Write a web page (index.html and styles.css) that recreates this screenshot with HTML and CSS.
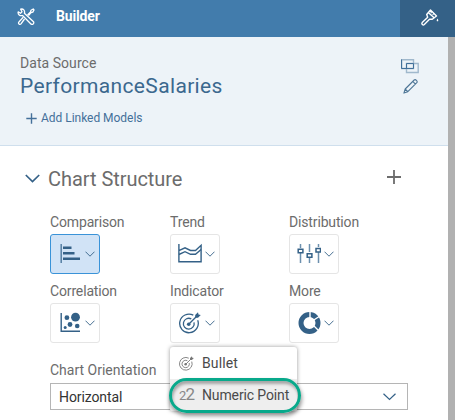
FILE: index.html
```html
<!DOCTYPE html>
<html lang="en">
<head>
<meta charset="utf-8">
<title>Builder</title>
<link rel="stylesheet" href="styles.css">
</head>
<body>
<svg width="0" height="0" class="defs">
  <symbol id="chev" viewBox="0 0 10 6"><path d="M.5 .7L5 5.200L9.500 .7" fill="none" stroke="currentColor" stroke-width=".9"/></symbol>
  <symbol id="target" viewBox="0 0 22 22"><g fill="none" stroke="currentColor" stroke-width="1.300"><path d="M14.300 3.200A9.300 9.300 0 1 0 18.700 8.200"/><path d="M12.300 6.900A5.400 5.400 0 1 0 15 10.300"/><path d="M9.700 12.300L17.500 4.500"/></g><circle cx="9.700" cy="12.200" r="1.800" fill="currentColor"/><path d="M16.200 5.800V3L19 .2L19.500 2.400L21.800 3L19 5.800z" fill="currentColor"/></symbol>
</svg>
<header class="topbar">
  <svg class="tools" width="18" height="18" viewBox="0 0 18 18" fill="none" stroke="currentColor" stroke-width="1.300" stroke-linejoin="round"><path d="M1.200 3.800L3.500 5.300L5 3.800L3.700 1.200C6.200 .4 8.200 2.600 7.400 5.300L16.500 13.700C17.400 15.200 15.800 17 14.200 16.200L5.500 7.500C3 8.300 .6 6.300 1.200 3.800z"/><path d="M7.500 11L4 15.900C2.800 17.200 .7 15.500 1.800 14.200L6.200 9.200M10.500 7L13.500 4L14 2.200L16.200 1L17 1.900L15.800 4.100L14 4.600L11.500 7.700"/></svg>
  <h1 class="title">Builder</h1>
  <div class="style-tab">
    <svg width="18" height="17" viewBox="0 0 18 17" fill="none" stroke="currentColor" stroke-width="1.400" stroke-linejoin="round"><path d="M5.700 5.500L9.500 1L15.500 7L11.300 10.200L8.500 10.300L3.300 15.500C2 16.700 .2 15 1.200 13.600L6.700 8.300z"/><path d="M7.300 3.500L13.300 9"/><path d="M11 2L9.800 4.200M13 4L11.700 6" stroke-width="1.100"/><path d="M16.500 9.500C15.300 11.500 15.600 12.300 16.500 12.300S17.700 11.500 16.500 9.500z" fill="currentColor" stroke="none"/></svg>
  </div>
</header>
<main class="panel">
  <section class="source">
    <div class="source-text">
      <div class="caption">Data Source</div>
      <div class="model">PerformanceSalaries</div>
      <div class="add"><svg width="11" height="11" viewBox="0 0 11 11"><path d="M5.500 .3V10.700M.3 5.500H10.700" stroke="currentColor" stroke-width="1.400"/></svg><span>Add Linked Models</span></div>
    </div>
    <div class="source-actions">
      <svg width="18" height="15" viewBox="0 0 18 15" fill="none"><path d="M.7 .7H12.500V9.500H.7zM5.500 4.500H17.200V13.500H5.500z" stroke="#a0b8cc" stroke-width="1.400"/><path d="M.5 .5V9.500H12.500V4.500H5.500V9.500" stroke="#41709a"/></svg>
      <svg width="15" height="15" viewBox="0 0 15 15" fill="none" stroke="#4d7596" stroke-width="1.100" stroke-linejoin="round"><path d="M.9 14.100L2.200 10L11.200 1C12.500 -.1 15 2.300 13.800 3.700L4.800 12.700zM2.200 10L4.800 12.700M9.800 2.400L12.400 5.100"/></svg>
    </div>
  </section>
  <section class="structure">
    <div class="heading">
      <svg class="blue" width="15" height="9" viewBox="0 0 15 9"><path d="M.8 1L7.500 7.500L14.200 1" fill="none" stroke="currentColor" stroke-width="1.700"/></svg>
      <h2>Chart Structure</h2>
      <svg class="plus" width="14" height="14" viewBox="0 0 14 14"><path d="M7 0V14M0 7H14" stroke="currentColor" stroke-width="1.800"/></svg>
    </div>
    <div class="types">
      <div class="type"><span>Comparison</span>
        <div class="button selected"><svg class="icon" width="22" height="22" viewBox="0 0 22 22"><path d="M2.200 1V20" stroke="#557fa3" stroke-width="1.500"/><path d="M4 4.800H12.500M4 10.300H15.500M4 15.700H21" stroke="currentColor" stroke-width="2.400"/></svg><svg class="chev" width="10" height="6"><use href="#chev"/></svg></div></div>
      <div class="type"><span>Trend</span>
        <div class="button"><svg class="icon wide" width="24" height="22" viewBox="0 0 24 22" fill="none" stroke="currentColor" stroke-width="1.400"><path d="M.9 1V18.700H23.100V2.300L17.500 7.500H12.500L7 4.800L.9 7.600"/><path d="M.9 11.500L7 8.700L12.500 11.300H17.500L23.100 6.500"/></svg><svg class="chev" width="10" height="6"><use href="#chev"/></svg></div></div>
      <div class="type"><span>Distribution</span>
        <div class="button"><svg class="icon wide" width="24" height="22" viewBox="0 0 24 22" fill="none" stroke="currentColor" stroke-width="1.500"><path d="M3.500 1V5M3.500 10V20M12.500 1V9M12.500 15V20M21.500 1V4M21.500 9V20" stroke="#6c90ae"/><path d="M1.200 6.200H5.900V9.700H1.200zM10.200 10.700H14.900V14.200H10.200zM19 5.400H23.500V8.900H19z"/></svg><svg class="chev" width="10" height="6"><use href="#chev"/></svg></div></div>
      <div class="type"><span>Correlation</span>
        <div class="button"><svg class="icon" width="22" height="22" viewBox="0 0 22 22" fill="currentColor"><path d="M2.200 1V19.200H21" fill="none" stroke="currentColor" stroke-width="1.400"/><circle cx="7.900" cy="5.700" r="2.400"/><circle cx="16.500" cy="5.200" r="4.400"/><circle cx="11" cy="12.500" r="2.400"/><circle cx="18.200" cy="14" r="2.300"/><circle cx="6.200" cy="15.500" r="1.500"/></svg><svg class="chev" width="10" height="6"><use href="#chev"/></svg></div></div>
      <div class="type"><span>Indicator</span>
        <div class="button"><svg class="icon target" width="22" height="22"><use href="#target"/></svg><svg class="chev" width="10" height="6"><use href="#chev"/></svg></div></div>
      <div class="type"><span>More</span>
        <div class="button"><svg class="icon donut" width="24" height="24" viewBox="0 0 24 24"><circle cx="11.500" cy="12" r="8.500" fill="none" stroke="currentColor" stroke-width="5"/><path d="M12 0V8M15 9.500L22 5M15 14L20.500 19.500" stroke="#fff" stroke-width="1.400"/></svg><svg class="chev" width="10" height="6"><use href="#chev"/></svg></div></div>
    </div>
    <div class="orientation">
      <span class="label">Chart Orientation</span>
      <div class="select"><span>Horizontal</span><svg class="blue" width="13" height="8" viewBox="0 0 13 8"><path d="M.5 .8L6.500 6.500L12.500 .8" fill="none" stroke="currentColor" stroke-width="1.200"/></svg></div>
    </div>
  </section>
</main>
<div class="menu">
  <div class="item"><svg width="15" height="15"><use href="#target"/></svg><span class="bullet">Bullet</span></div>
  <div class="item active"><span class="digits"><small>2</small>2</span><span class="numeric">Numeric Point</span></div>
</div>
<div class="ring"></div>
</body>
</html>
```
FILE: styles.css
```css
* { box-sizing: border-box; }
body {
  margin: 0;
  width: 455px;
  height: 420px;
  overflow: hidden;
  background: #fff;
  color: #6c6c6c;
  font: 14px/18px Roboto, "Liberation Sans", sans-serif;
}
svg { display: block; flex: none; }
.defs { position: absolute; }
.topbar {
  display: flex;
  align-items: center;
  height: 37px;
  padding-left: 17px;
  background: #427cac;
  color: #fff;
}
.title { margin: 0 auto 5px 21px; font-size: 14px; line-height: 18px; font-weight: 700; letter-spacing: -.15px; }
.tools { margin-bottom: 3px; }
.style-tab {
  width: 55px;
  height: 37px;
  padding: 9px 0 0 21px;
  background: #346187;
}
.panel { height: 383px; border-right: 7px solid #b1b1b1; }
.source {
  display: flex;
  justify-content: space-between;
  height: 109px;
  padding: 17px 29px 0 20px;
  background: #edf3f8;
  border-bottom: 1px solid #cfdfed;
}
.caption { letter-spacing: .05px; }
.model { margin-top: 1px; font-size: 21px; line-height: 26px; color: #3b688e; letter-spacing: .35px; }
.add { display: flex; align-items: center; gap: 4px; margin: 10px 0 0 6px; font-size: 12px; color: #44709a; letter-spacing: -.03px; }
.source-actions { padding-top: 5px; }
.source-actions svg + svg { margin: 5px 0 0 2px; }
.structure { padding: 21px 40px 0 50px; }
.heading { display: flex; align-items: center; height: 24px; margin-left: -25px; }
.heading h2 { margin: 0 auto 0 8px; font-size: 20px; line-height: 24px; font-weight: 400; letter-spacing: -.05px; }
.heading .plus { margin: -4px 7px 0 0; }
.heading .blue { margin-top: -1px; }
.blue { color: #346187; }
.types {
  display: grid;
  grid-template-columns: 120px 119px 119px;
  row-gap: 8px;
  margin-top: 22px;
}
.type span { display: block; height: 21px; letter-spacing: -.15px; }
.button {
  display: flex;
  align-items: center;
  width: 50px;
  height: 40px;
  padding-left: 8px;
  border: 1px solid #e5e5e5;
  border-radius: 3px;
  color: #346187;
}
.selected { background: #d1e3f6; border-color: #3a93d8; }
.icon { margin-right: 4px; }
.wide { margin: 0 3px 0 -1px; }
.donut { margin: 0 2px 0 0; }
.orientation { margin-top: 18px; }
.label { display: block; height: 22px; }
.select {
  display: flex;
  align-items: center;
  justify-content: space-between;
  width: 358px;
  height: 27px;
  padding: 0 11px 0 8px;
  border: 1px solid #b5b5b5;
  color: #333;
}
.select span { letter-spacing: -.1px; }
.menu {
  position: absolute;
  left: 170px;
  top: 347px;
  width: 127px;
  height: 64px;
  border-radius: 3px;
  background: #fff;
  box-shadow: 0 0 4px rgba(0, 0, 0, .4);
  color: #4a4a4a;
}
.item { display: flex; align-items: center; height: 32px; padding-left: 9px; }
.item > svg { width: 15px; color: #777; }
.bullet { margin-left: 8px; letter-spacing: .1px; }
.numeric { letter-spacing: -.13px; white-space: nowrap; }
.active { background: #eee; border-radius: 0 0 3px 3px; }
.digits { flex: none; width: 23px; font-size: 17px; color: #888; letter-spacing: -.8px; }
.digits small { font-size: 13px; }
.ring {
  position: absolute;
  left: 169px;
  top: 378px;
  width: 132px;
  height: 35px;
  border: 3px solid #08a98b;
  border-radius: 18px;
  box-shadow: 1px 3px 4px rgba(0, 0, 0, .4), inset 1px 3px 3px rgba(0, 0, 0, .3);
}
```
